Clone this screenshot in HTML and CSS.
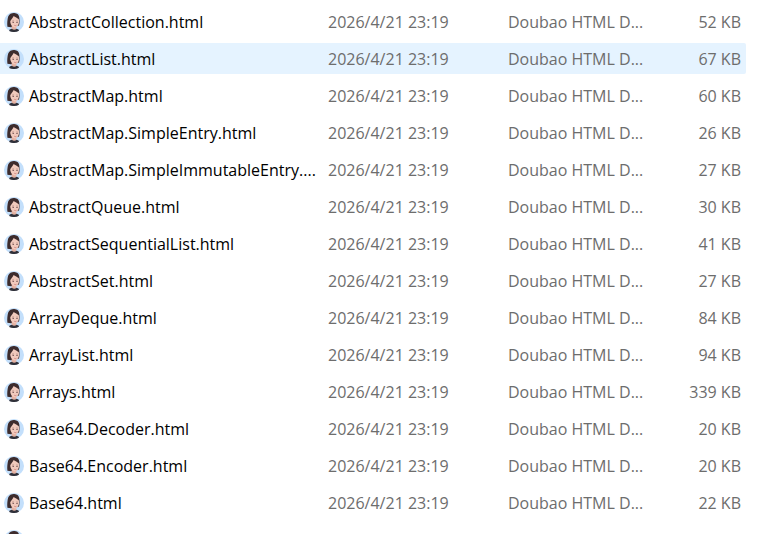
FILE: index.html
```
<!DOCTYPE html>
<html lang="en">
<head>
<meta charset="utf-8">
<title>Files</title>
<link rel="stylesheet" href="styles.css">
</head>
<body>
<svg class="sprite" aria-hidden="true">
  <symbol id="avatar" viewBox="0 0 20 20">
    <circle cx="10" cy="10" r="10" fill="#c3dffb"/>
    <path d="M3.400 14.800C3 11.500 3.400 7.500 4.200 4.600C5.200 1.800 8 .8 10.400 1C13.400 1.100 15 3 15.300 5.600C15.600 8 15.700 11 15 13.600L12 14.600L7 15.200Z" fill="#3d2c2d"/>
    <path d="M7.800 13H12.300V17.300L10.300 18.500L7.600 17.300Z" fill="#e5b2a2"/>
    <path d="M5.200 19L5.600 17.600L8 16.700C9 18 11.400 18 12.500 16.700L14.500 17.600L15 18.700C12 20.400 8 20.400 5.200 19Z" fill="#303039"/>
    <path d="M6.200 9.500C6.700 7.800 8.700 6.200 9.700 3.900C10.700 5.200 13.800 5.700 14.800 7.300C15.500 11 14.700 14.200 11.400 15.500C8.700 15.400 6.500 13 6.200 9.500Z" fill="#f1cabd"/>
    <path d="M8 9.100L10 8.900M12.300 8.900L13.900 9.100" stroke="#916862" stroke-width=".5"/>
    <circle cx="9.200" cy="10.400" r=".7" fill="#69494a"/>
    <circle cx="13" cy="10.400" r=".7" fill="#69494a"/>
    <path d="M10.300 13.300Q11.300 14 12.400 13.300" fill="none" stroke="#c87573" stroke-width=".8"/>
  </symbol>
</svg>
<table class="files">
  <colgroup><col class="c-name"><col class="c-date"><col class="c-type"><col class="c-size"></colgroup>
  <tbody>
    <tr><td><div class="name"><svg class="icon"><use href="#avatar"/></svg><span>AbstractCollection.html</span></div></td><td>2026/4/21 23:19</td><td>Doubao HTML D...</td><td>52 KB</td></tr>
    <tr class="active"><td><div class="name"><svg class="icon"><use href="#avatar"/></svg><span>AbstractList.html</span></div></td><td>2026/4/21 23:19</td><td>Doubao HTML D...</td><td>67 KB</td></tr>
    <tr><td><div class="name"><svg class="icon"><use href="#avatar"/></svg><span>AbstractMap.html</span></div></td><td>2026/4/21 23:19</td><td>Doubao HTML D...</td><td>60 KB</td></tr>
    <tr><td><div class="name"><svg class="icon"><use href="#avatar"/></svg><span>AbstractMap.SimpleEntry.html</span></div></td><td>2026/4/21 23:19</td><td>Doubao HTML D...</td><td>26 KB</td></tr>
    <tr><td><div class="name"><svg class="icon"><use href="#avatar"/></svg><span>AbstractMap.SimpleImmutableEntry....</span></div></td><td>2026/4/21 23:19</td><td>Doubao HTML D...</td><td>27 KB</td></tr>
    <tr><td><div class="name"><svg class="icon"><use href="#avatar"/></svg><span>AbstractQueue.html</span></div></td><td>2026/4/21 23:19</td><td>Doubao HTML D...</td><td>30 KB</td></tr>
    <tr><td><div class="name"><svg class="icon"><use href="#avatar"/></svg><span>AbstractSequentialList.html</span></div></td><td>2026/4/21 23:19</td><td>Doubao HTML D...</td><td>41 KB</td></tr>
    <tr><td><div class="name"><svg class="icon"><use href="#avatar"/></svg><span>AbstractSet.html</span></div></td><td>2026/4/21 23:19</td><td>Doubao HTML D...</td><td>27 KB</td></tr>
    <tr><td><div class="name"><svg class="icon"><use href="#avatar"/></svg><span>ArrayDeque.html</span></div></td><td>2026/4/21 23:19</td><td>Doubao HTML D...</td><td>84 KB</td></tr>
    <tr><td><div class="name"><svg class="icon"><use href="#avatar"/></svg><span>ArrayList.html</span></div></td><td>2026/4/21 23:19</td><td>Doubao HTML D...</td><td>94 KB</td></tr>
    <tr><td><div class="name"><svg class="icon"><use href="#avatar"/></svg><span>Arrays.html</span></div></td><td>2026/4/21 23:19</td><td>Doubao HTML D...</td><td>339 KB</td></tr>
    <tr><td><div class="name"><svg class="icon"><use href="#avatar"/></svg><span>Base64.Decoder.html</span></div></td><td>2026/4/21 23:19</td><td>Doubao HTML D...</td><td>20 KB</td></tr>
    <tr><td><div class="name"><svg class="icon"><use href="#avatar"/></svg><span>Base64.Encoder.html</span></div></td><td>2026/4/21 23:19</td><td>Doubao HTML D...</td><td>20 KB</td></tr>
    <tr><td><div class="name"><svg class="icon"><use href="#avatar"/></svg><span>Base64.html</span></div></td><td>2026/4/21 23:19</td><td>Doubao HTML D...</td><td>22 KB</td></tr>
    <tr><td><div class="name"><svg class="icon"><use href="#avatar"/></svg></div></td><td></td><td></td><td></td></tr>
  </tbody>
</table>
</body>
</html>
```

FILE: styles.css
```
body {
  margin: 0;
  height: 100vh;
  overflow: hidden;
  padding-right: 38px;
  box-sizing: border-box;
  background: #fff;
  color: #6d6d6d;
  font: 16px/20px "Open Sans", "Noto Sans", sans-serif;
}

.sprite {
  display: block;
  width: 0;
  height: 0;
}

.files {
  width: 100%;
  table-layout: fixed;
  border-collapse: separate;
  border-spacing: 0 6px;
}

.c-name { width: 324px; }
.c-date { width: 180px; }
.c-type { width: 144px; }

td {
  height: 31px;
  padding: 0 4px;
  white-space: nowrap;
  vertical-align: middle;
}

td:last-child {
  padding-right: 5px;
  text-align: right;
  border-radius: 0 2px 2px 0;
}

.active td {
  background: #e5f3ff;
}

.name {
  display: flex;
  align-items: center;
  gap: 5px;
  color: #000;
}

.icon {
  flex: none;
  width: 20px;
  height: 20px;
}
```
